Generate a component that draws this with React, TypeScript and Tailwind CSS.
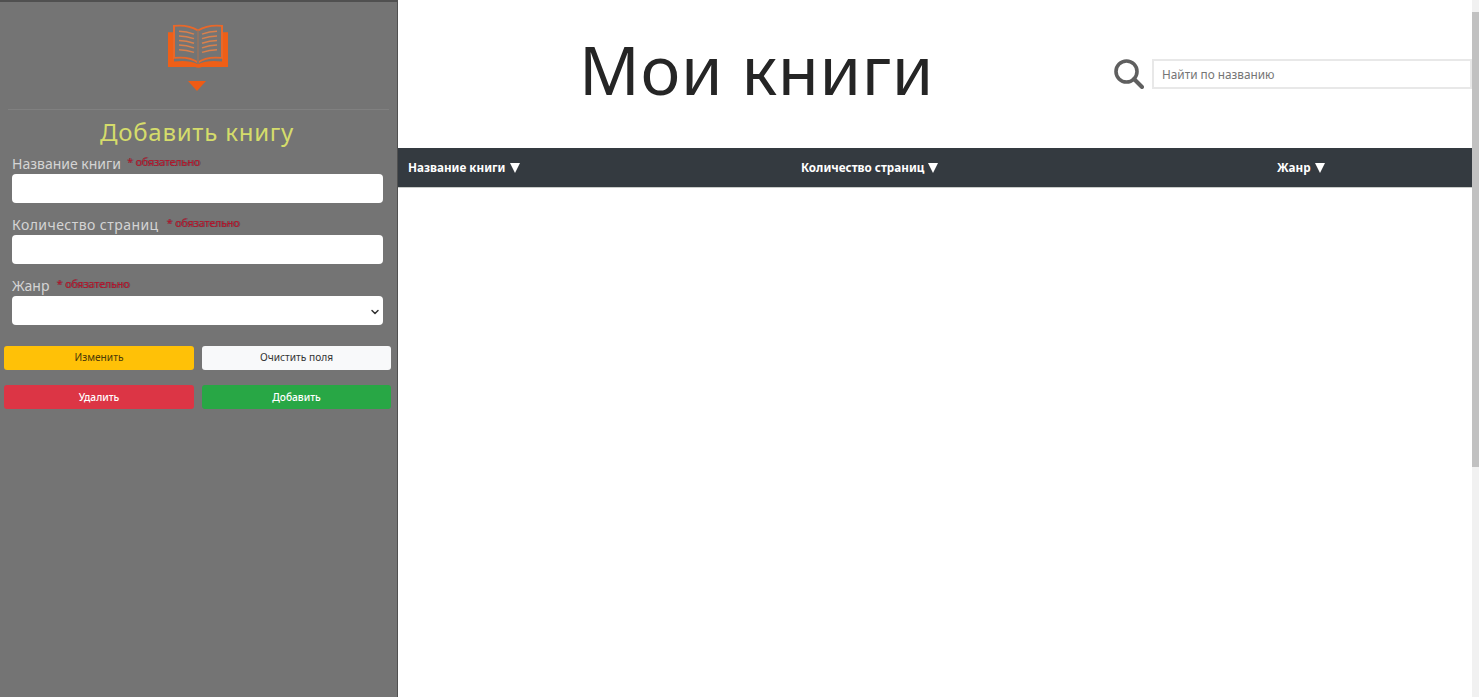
import { ChevronDown } from "lucide-react";

const FIELDS = [
  { label: "Название книги", tracking: "tracking-[0px]", gap: "ml-[6px]" },
  { label: "Количество страниц", tracking: "tracking-[0.45px]", gap: "ml-[8px]" },
];

function FieldLabel({ label, tracking, gap }: { label: string; tracking: string; gap: string }) {
  return (
    <div className="flex h-[21px] items-start">
      <span className={`text-[14px] leading-[21px] text-[#d4d4d4] ${tracking}`}>{label}</span>
      <span className={`text-[10.5px] leading-[18px] text-[#b5122b] [text-shadow:1px_0_0_rgba(60,10,20,0.45)] ${gap}`}>
        * обязательно
      </span>
    </div>
  );
}

function BookLogo() {
  return (
    <svg width="62" height="44" viewBox="0 0 62 48" fill="none" preserveAspectRatio="none">
      <path d="M0 9h6v32c8-1 17-1 24 3 7-4 16-4 24-3V9h6v38H34c-2 1-5 1-7 0H0z" fill="#ef5f17" />
      <path d="M6 2c9-1 18 1 24 5 6-4 15-6 24-5v35c-9-1-18 0-24 5-6-5-15-6-24-5z" stroke="#e8682a" strokeWidth="2" />
      <path d="M30 7v36" stroke="#8f7464" strokeWidth="2" />
      <path
        d="M11 8c5 0 10 1 15 3M11 13c5 0 10 1 15 3M11 18c5 0 10 1 15 3M11 23c5 0 10 1 15 3M11 28c5 0 10 1 15 3M34 11c5-2 10-3 15-3M34 16c5-2 10-3 15-3M34 21c5-2 10-3 15-3M34 26c5-2 10-3 15-3M34 31c5-2 10-3 15-3"
        stroke="#d9804c"
        strokeWidth="1.6"
      />
    </svg>
  );
}

function ActionButton({ label, className }: { label: string; className: string }) {
  return <button className={`h-6 rounded-[3px] text-[10.2px] ${className}`}>{label}</button>;
}

function Sidebar() {
  return (
    <aside className="flex w-[398px] shrink-0 flex-col border-t-2 border-r border-[#505050] bg-[#747474]">
      <div className="mx-2 flex h-[108px] flex-col items-center border-b border-[#808080] pt-[22px]">
        <BookLogo />
        <div className="mt-[13px] mr-[3px] h-0 w-0 border-x-[9px] border-t-[10px] border-x-transparent border-t-[#ef5b14]" />
      </div>
      <h2 className="mt-[7px] h-[36px] pr-[3px] text-center text-[24px] leading-[30px] tracking-[0.77px] text-[#d5dc6b]">
        Добавить книгу
      </h2>
      <div className="px-3">
        {FIELDS.map((f) => (
          <div key={f.label} className="mb-[11px]">
            <FieldLabel label={f.label} tracking={f.tracking} gap={f.gap} />
            <input className="block h-[29px] w-[371px] rounded-[4px] bg-white" />
          </div>
        ))}
        <div>
          <FieldLabel label="Жанр" tracking="tracking-[0px]" gap="ml-[7px]" />
          <div className="relative h-[29px] w-[371px] rounded-[4px] bg-white">
            <ChevronDown className="absolute top-[10px] right-[2px] h-3 w-3 text-[#333]" strokeWidth={3} />
          </div>
        </div>
      </div>
      <div className="mt-[21px] flex flex-col gap-[15px] pl-1">
        <div className="flex gap-2">
          <ActionButton label="Изменить" className="w-[190px] bg-[#ffc107] text-[#4b3a08]" />
          <ActionButton label="Очистить поля" className="w-[189px] bg-[#f8f9fa] text-[#333]" />
        </div>
        <div className="flex gap-2">
          <ActionButton label="Удалить" className="w-[190px] bg-[#dc3545] pt-[1px] font-medium text-white" />
          <ActionButton label="Добавить" className="w-[189px] bg-[#28a745] pt-[1px] font-medium text-white" />
        </div>
      </div>
    </aside>
  );
}

function SortHeader({ label, className }: { label: string; className: string }) {
  return (
    <div className={`flex items-center text-[11.7px] font-bold text-white ${className}`}>
      {label}
      <span className="mt-[1px] ml-[4px] h-0 w-0 border-x-[5.5px] border-t-[10px] border-x-transparent border-t-white" />
    </div>
  );
}

function Main() {
  return (
    <main className="flex min-w-0 flex-1 flex-col">
      <header className="flex h-[148px] items-center">
        <h1 className="w-[716px] pb-[10px] pl-[181px] text-[67px] leading-none tracking-[0.7px] whitespace-nowrap text-[#252525]">
          Мои книги
        </h1>
        <svg width="30" height="30" viewBox="0 0 30 30" fill="none">
          <circle cx="12.5" cy="12.5" r="10.5" stroke="#5f5f5f" strokeWidth="3.6" />
          <path d="M20 20l8 8" stroke="#5f5f5f" strokeWidth="4" strokeLinecap="round" />
        </svg>
        <input
          placeholder="Найти по названию"
          className="ml-[8px] h-[30px] flex-1 border-2 border-[#e8e8e8] bg-white px-[8px] text-[11.8px] text-[#333] outline-none placeholder:text-[#757575]"
        />
      </header>
      <div className="flex h-[40px] items-center border-b border-[#c9ccc9] bg-[#343a40]">
        <SortHeader label="Название книги" className="w-[403px] pl-[10px]" />
        <SortHeader label="Количество страниц" className="w-[476px]" />
        <SortHeader label="Жанр" className="" />
      </div>
    </main>
  );
}

function Scrollbar() {
  return (
    <div className="flex w-[7px] shrink-0 flex-col bg-[#f1f1f1]">
      <div className="h-[12px]" />
      <div className="h-[455px] bg-[#c1c1c1]" />
    </div>
  );
}

export default function App() {
  return (
    <div className="flex h-[697px] w-full overflow-hidden bg-white font-['Noto_Sans',sans-serif]">
      <Sidebar />
      <Main />
      <Scrollbar />
    </div>
  );
}
